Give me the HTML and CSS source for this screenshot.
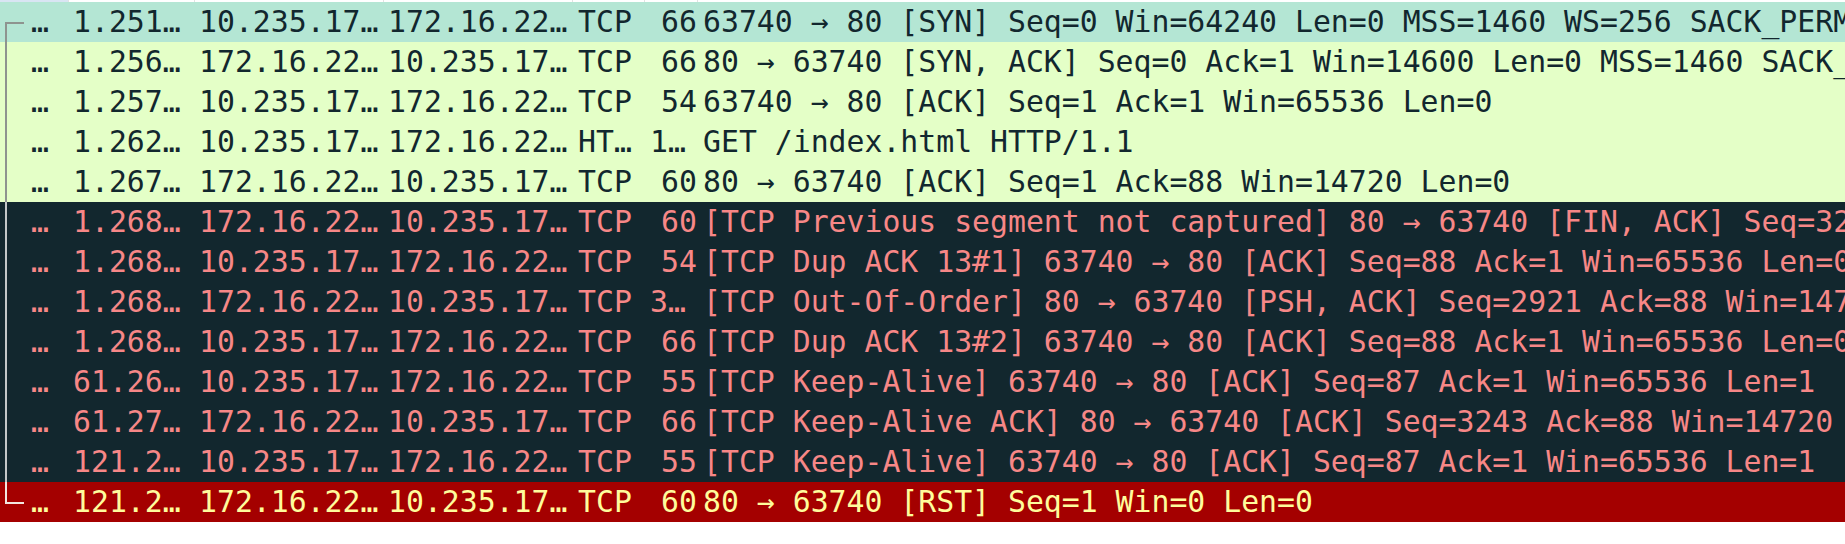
FILE: index.html
```html
<!DOCTYPE html>
<html>
<head>
<meta charset="utf-8">
<link rel="stylesheet" href="styles.css">
</head>
<body>
<div class="list">
  <div class="head">
    <span class="h h-sorted"></span><span class="h"></span><span class="h"></span><span class="h"></span><span class="h"></span><span class="h"></span><span class="h h-last"></span>
  </div>

  <div class="row hover first">
    <span class="c num">…</span><span class="c">1.251…</span><span class="c">10.235.17…</span><span class="c">172.16.22…</span><span class="c proto">TCP</span><span class="c len">66</span><span class="c info">63740 → 80 [SYN] Seq=0 Win=64240 Len=0 MSS=1460 WS=256 SACK_PERM</span>
  </div>
  <div class="row http">
    <span class="c num">…</span><span class="c">1.256…</span><span class="c">172.16.22…</span><span class="c">10.235.17…</span><span class="c proto">TCP</span><span class="c len">66</span><span class="c info">80 → 63740 [SYN, ACK] Seq=0 Ack=1 Win=14600 Len=0 MSS=1460 SACK_PERM</span>
  </div>
  <div class="row http">
    <span class="c num">…</span><span class="c">1.257…</span><span class="c">10.235.17…</span><span class="c">172.16.22…</span><span class="c proto">TCP</span><span class="c len">54</span><span class="c info">63740 → 80 [ACK] Seq=1 Ack=1 Win=65536 Len=0</span>
  </div>
  <div class="row http">
    <span class="c num">…</span><span class="c">1.262…</span><span class="c">10.235.17…</span><span class="c">172.16.22…</span><span class="c proto">HT…</span><span class="c len elided">1…</span><span class="c info">GET /index.html HTTP/1.1</span>
  </div>
  <div class="row http">
    <span class="c num">…</span><span class="c">1.267…</span><span class="c">172.16.22…</span><span class="c">10.235.17…</span><span class="c proto">TCP</span><span class="c len">60</span><span class="c info">80 → 63740 [ACK] Seq=1 Ack=88 Win=14720 Len=0</span>
  </div>
  <div class="row bad">
    <span class="c num">…</span><span class="c">1.268…</span><span class="c">172.16.22…</span><span class="c">10.235.17…</span><span class="c proto">TCP</span><span class="c len">60</span><span class="c info">[TCP Previous segment not captured] 80 → 63740 [FIN, ACK] Seq=3243 Ack=88 Win=14720 Len=0</span>
  </div>
  <div class="row bad">
    <span class="c num">…</span><span class="c">1.268…</span><span class="c">10.235.17…</span><span class="c">172.16.22…</span><span class="c proto">TCP</span><span class="c len">54</span><span class="c info">[TCP Dup ACK 13#1] 63740 → 80 [ACK] Seq=88 Ack=1 Win=65536 Len=0</span>
  </div>
  <div class="row bad">
    <span class="c num">…</span><span class="c">1.268…</span><span class="c">172.16.22…</span><span class="c">10.235.17…</span><span class="c proto">TCP</span><span class="c len elided">3…</span><span class="c info">[TCP Out-Of-Order] 80 → 63740 [PSH, ACK] Seq=2921 Ack=88 Win=14720 Len=322</span>
  </div>
  <div class="row bad">
    <span class="c num">…</span><span class="c">1.268…</span><span class="c">10.235.17…</span><span class="c">172.16.22…</span><span class="c proto">TCP</span><span class="c len">66</span><span class="c info">[TCP Dup ACK 13#2] 63740 → 80 [ACK] Seq=88 Ack=1 Win=65536 Len=0 SLE=2921 SRE=3243</span>
  </div>
  <div class="row bad">
    <span class="c num">…</span><span class="c">61.26…</span><span class="c">10.235.17…</span><span class="c">172.16.22…</span><span class="c proto">TCP</span><span class="c len">55</span><span class="c info">[TCP Keep-Alive] 63740 → 80 [ACK] Seq=87 Ack=1 Win=65536 Len=1</span>
  </div>
  <div class="row bad">
    <span class="c num">…</span><span class="c">61.27…</span><span class="c">172.16.22…</span><span class="c">10.235.17…</span><span class="c proto">TCP</span><span class="c len">66</span><span class="c info">[TCP Keep-Alive ACK] 80 → 63740 [ACK] Seq=3243 Ack=88 Win=14720 Len=0 SLE=87 SRE=88</span>
  </div>
  <div class="row bad">
    <span class="c num">…</span><span class="c">121.2…</span><span class="c">10.235.17…</span><span class="c">172.16.22…</span><span class="c proto">TCP</span><span class="c len">55</span><span class="c info">[TCP Keep-Alive] 63740 → 80 [ACK] Seq=87 Ack=1 Win=65536 Len=1</span>
  </div>
  <div class="row rst last">
    <span class="c num">…</span><span class="c">121.2…</span><span class="c">172.16.22…</span><span class="c">10.235.17…</span><span class="c proto">TCP</span><span class="c len">60</span><span class="c info">80 → 63740 [RST] Seq=1 Win=0 Len=0</span>
  </div>
</div>
</body>
</html>
```
FILE: styles.css
```css
html, body {
  margin: 0;
  padding: 0;
  background: #ffffff;
}

.list {
  width: 1845px;
  overflow: hidden;
  font-family: "DejaVu Sans Mono", "Liberation Mono", monospace;
  font-size: 29.8px;
}

.head,
.row {
  display: grid;
  grid-template-columns: 69px 126px 189px 189px 72px 53px 1fr;
}

.head {
  height: 2px;
}

.h {
  border-right: 1px solid #e2e2e2;
}

.h-sorted {
  background: #d9e5f3;
}

.h-last {
  border-right: none;
}

.row {
  height: 40px;
  line-height: 40px;
  white-space: nowrap;
}

.c {
  overflow: hidden;
  padding-left: 4px;
}

.num {
  position: relative;
  padding-left: 31px;
  overflow: visible;
}

.proto {
  padding-left: 5px;
}

.len {
  padding-left: 0;
  padding-right: 1px;
  text-align: right;
}

.len.elided {
  padding-right: 12px;
}

.info {
  padding-left: 5px;
}

/* colouring rules */
.hover {
  background: #b4e6d4;
  color: #12272e;
}

.http {
  background: #e4ffc7;
  color: #12272e;
}

.bad {
  background: #12272e;
  color: #f78787;
}

.rst {
  background: #a40000;
  color: #fffc9c;
}

/* related-packet bracket in the No. column */
.num::before {
  content: "";
  position: absolute;
  left: 5px;
  top: 0;
  bottom: 0;
  width: 2px;
  background: #8e948f;
}

.bad .num::before {
  background: #c3c7c8;
}

.first .num::before {
  top: 20px;
}

.last .num::before {
  bottom: 20px;
  background: #f2e6e0;
}

.first .num::after,
.last .num::after {
  content: "";
  position: absolute;
  left: 5px;
  width: 19px;
  height: 2px;
  top: 20px;
  background: #8e948f;
}

.last .num::after {
  background: #f2e6e0;
}
```
